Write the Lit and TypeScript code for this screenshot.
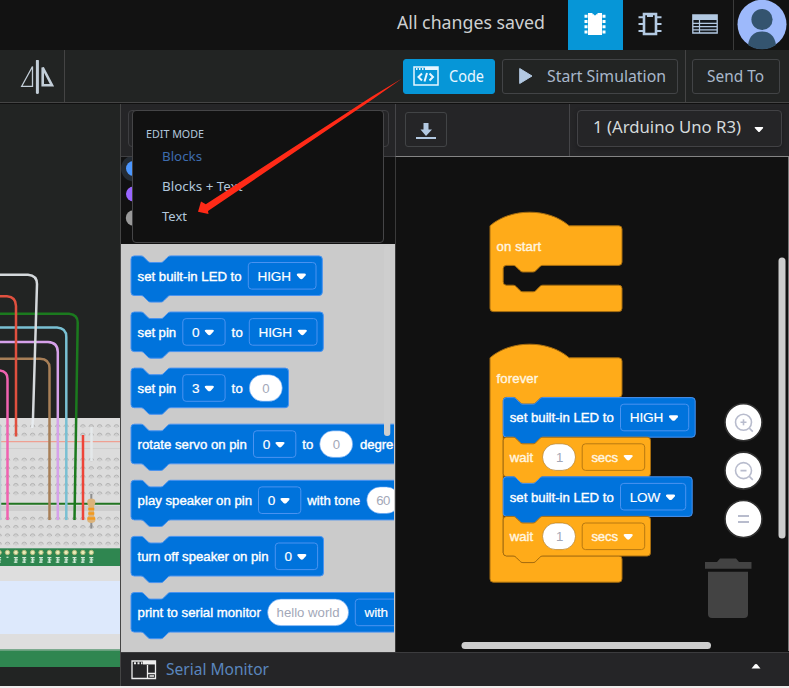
import { LitElement, html, svg, css } from "lit";
import { customElement, property } from "lit/decorators.js";

// Block geometry is expressed in grid units; U converts a unit to pixels.
const U = 0.825;
const NOTCH = "c2,0 3,1 4,2 l4,4 c1,1 2,2 4,2 h12 c2,0 3,-1 4,-2 l4,-4 c1,-1 2,-2 4,-2";
const NOTCH_BACK = "c-2,0 -3,1 -4,2 l-4,4 c-1,1 -2,2 -4,2 h-12 c-2,0 -3,-1 -4,-2 l-4,-4 c-1,-1 -2,-2 -4,-2";

type Tone = "blue" | "orange";
type Part = { kind: "text" | "menu" | "value"; x: number; w: number; text: string; tw?: number };
type Block = { tone: Tone; w: number; parts: Part[] };

const t = (text: string, x: number, w: number): Part => ({ kind: "text", text, x, w });
const menu = (text: string, x: number, w: number, tw: number): Part => ({ kind: "menu", text, x, w, tw });
const value = (text: string, x: number, w: number, tw: number): Part => ({ kind: "value", text, x, w, tw });

const PALETTE: Block[] = [
  { tone: "blue", w: 191.3, parts: [t("set built-in LED to", 6.6, 104), menu("HIGH", 117.3, 67.7, 33.5)] },
  { tone: "blue", w: 192.3, parts: [t("set pin", 6.6, 38.5), menu("0", 51.8, 42.3, 7), t("to", 100.6, 11.2), menu("HIGH", 118.3, 67.7, 33.5)] },
  { tone: "blue", w: 157.5, parts: [t("set pin", 6.6, 38.5), menu("3", 51.8, 42.3, 7), t("to", 100.6, 11.2), value("0", 118.3, 33, 7)] },
  { tone: "blue", w: 330, parts: [t("rotate servo on pin", 6.6, 109.3), menu("0", 122.5, 42.3, 7), t("to", 171.2, 11.2), value("0", 188.7, 33, 7), t("degre", 228.9, 33.4)] },
  { tone: "blue", w: 330, parts: [t("play speaker on pin", 6.6, 114.5), menu("0", 127.5, 42.3, 7), t("with tone", 176.3, 52.7), value("60", 235.8, 33, 14)] },
  { tone: "blue", w: 192.5, parts: [t("turn off speaker on pin", 6.6, 131), menu("0", 144.3, 42.3, 7)] },
  { tone: "blue", w: 330, parts: [t("print to serial monitor", 6.6, 123.2), value("hello world", 136.6, 81, 63), menu("with", 224.3, 110, 23.5)] },
];
const led = (state: string, w: number, tw: number): Block => ({
  tone: "blue", w: w + 123.8, parts: [t("set built-in LED to", 6.6, 104), menu(state, 117.3, w, tw)],
});
const wait: Block = { tone: "orange", w: 147.3, parts: [t("wait", 6.6, 23.3), value("1", 39.3, 33, 6), menu("secs", 79, 62.5, 26.5)] };
const LOOP: Block[] = [led("HIGH", 68.2, 33.5), wait, led("LOW", 65.2, 30.5), wait];

const caret = (x: number, y: number) => svg`<path d="M${x} ${y}h6.4q2 .2 1 1.9l-2.7 3q-1.5 1.3-3 0l-2.7-3q-1-1.7 1-1.9z" fill="#fff"/>`;

function drawBlock(b: Block, x: number, y: number) {
  const w = b.w / U;
  const d = `M0,4 a4,4 0 0 1 4,-4 h8 ${NOTCH} H${w - 4} a4,4 0 0 1 4,4 v40 a4,4 0 0 1 -4,4 H48 ${NOTCH_BACK} h-8 a4,4 0 0 1 -4,-4 z`;
  return svg`<g class=${b.tone} transform="translate(${x} ${y})">
    <path class="shape" d=${d} transform="scale(${U})"/>
    ${b.parts.map((p) => {
      if (p.kind === "text") return svg`<text class="word" x=${p.x} y="24.9" textLength=${p.w}>${p.text}</text>`;
      // The caret sits beside its word, or at the far end when the field runs past the panel.
      if (p.kind === "menu") return svg`<rect class="field" x=${p.x} y="6.6" width=${p.w} height="26.6" rx="3.3"/>
        <text class="opt" x=${p.x + 9.3} y="24.9" textLength=${p.tw}>${p.text}</text>${caret(p.w > 100 ? p.x + p.w - 16 : p.x + 9.3 + (p.tw ?? 0) + 7, 17.7)}`;
      return svg`<rect class="value" x=${p.x} y="6.6" width=${p.w} height="26.6" rx="13.3"/>
        <text class="val" x=${p.x + (p.w - (p.tw ?? 0)) / 2} y="24.9" textLength=${p.tw}>${p.text}</text>`;
    })}
  </g>`;
}

function drawHat(name: string, nameWidth: number, x: number, y: number, inner: number) {
  const d = `M0,0 c25,-22 71,-22 96,0 H156 a4,4 0 0 1 4,4 v40 a4,4 0 0 1 -4,4 H64 ${NOTCH_BACK} h-8 a4,4 0 0 0 -4,4 v${inner - 8} a4,4 0 0 0 4,4 h8 ${NOTCH} H156 a4,4 0 0 1 4,4 v24 a4,4 0 0 1 -4,4 H4 a4,4 0 0 1 -4,-4 z`;
  return svg`<g class="orange" transform="translate(${x} ${y})">
    <path class="shape" d=${d} transform="scale(${U})"/>
    <text class="word" x="6.6" y="25.2" textLength=${nameWidth}>${name}</text>
  </g>`;
}

const blockStyles = css`
  .blue .shape { fill: #0073dc; stroke: #4a93f0; }
  .orange .shape { fill: #ffab19; stroke: #a66d10; }
  .shape { stroke-width: 1px; vector-effect: non-scaling-stroke; }
  .field { fill: none; }
  .blue .field { stroke: #4a93f0; }
  .orange .field { stroke: #b87911; }
  .value { fill: #fff; stroke: #5b9df0; stroke-width: .6; }
  .orange .value { stroke: #a66d10; }
  text { font: 13.2px "Liberation Sans", Arial, sans-serif; }
  .word { fill: #fff; stroke: #fff; stroke-width: .38; }
  .opt { fill: #fff; stroke: #fff; stroke-width: .15; font-size: 13.6px; }
  .orange .word, .orange .opt { fill: #fff6e0; stroke: #fff6e0; stroke-width: .38; font-size: 13.2px; }
  .val { fill: #a3a8b8; }
`;

@customElement("fit-label")
class FitLabel extends LitElement {
  @property() text = "";
  @property({ type: Number }) width = 100;
  @property({ type: Number }) size = 16;
  static styles = css`
    :host { display: block; flex: none; }
    svg { display: block; overflow: visible; }
    text { font-family: "Noto Sans", "Open Sans", sans-serif; fill: currentColor; }
  `;
  render() {
    return html`<svg width=${this.width} height=${this.size}><text y=${this.size * 0.86} font-size=${this.size} textLength=${this.width} lengthAdjust="spacingAndGlyphs">${this.text}</text></svg>`;
  }
}

@customElement("circuit-view")
class CircuitView extends LitElement {
  static styles = css`
    :host { display: block; overflow: hidden; background: #222423; }
    svg { display: block; }
    .wire { fill: none; stroke-width: 2.5; stroke-linecap: butt; }
    .hole { fill: #cfcfcf; stroke: none; }
    .rim { fill: none; stroke: #b0b0b0; stroke-width: .9; }
  `;
  render() {
    const cols = Array.from({ length: 15 }, (_, i) => -0.9 + i * 8.38);
    const rows = [426.5, 435, 460, 468.5, 477, 485.3, 493.7, 519, 527.3, 535.7, 544];
    const wires: [string, string][] = [
      ["#f062b0", "M-4 370.5H-1Q7.5 371 7.5 379V520"],
      ["#a87f57", "M0 358.7H40Q49.5 359 49.5 368V520"],
      ["#d6a1ea", "M0 342H48Q57.8 342.5 57.8 352V520"],
      ["#79c0d3", "M0 327.5H57Q66.3 328 66.3 337V520"],
      ["#1b7a1e", "M0 313.7H69Q78 314.5 77.7 323L74.5 520"],
      ["#e0503f", "M0 296.3H7Q16 297 16 306V436.5"],
      ["#ee4438", "M83 435V520"],
      ["#d5d9dc", "M0 274.7H28Q37 275.5 37 284L33 418"],
      ["#e8ecef", "M33 418L32.3 428"],
      ["#e4e8ea", "M91.5 427V461"],
      ["#b9cbd2", "M0 426V520"],
    ];
    return html`<svg width="120" height="582" viewBox="0 104 120 582">
      <rect y="418" width="120" height="249" fill="#dcdcdc"/>
      <path d="M0 448.5H120" stroke="#cfcfcf"/>
      <path d="M0 441.6H120" stroke="#efa092" stroke-width="1.3"/>
      <rect y="506" width="120" height="5" fill="#cdcdcd"/>
      ${rows.map((y) => cols.map((x) => svg`<circle class="hole" cx=${x} cy=${y} r="1.8"/><path class="rim" d="M${x - 2.3} ${y + 0.4}a2.3 2.3 0 0 1 4.6 0"/>`))}
      <path d="M0 503.8H120" stroke="#227522" stroke-width="2"/>
      <rect y="548.3" width="120" height="17.7" fill="#2f8650"/>
      ${cols.slice(0, 12).map((x, i) => svg`<circle cx=${x} cy="552.5" r="2.2" fill="#e8ecb8" stroke="#b3b77b"/>
        <path d=${i === 1 ? `M${x - 1} 557.3h2` : `M${x - 2} 557.6h4M${x - 1.5} 559.8h3.5M${x - 2} 562.2h3.6M${x} 557v6`} stroke="#cfe8d5" stroke-width="1.2"/>`)}
      <rect y="566" width="120" height="15" fill="#dedede"/>
      <rect y="581" width="120" height="53" fill="#dde9fc"/>
      <rect y="634" width="120" height="15.5" fill="#dedede"/>
      <rect y="649.5" width="120" height="17.5" fill="#2f8650"/>
      <path d="M0 650H120" stroke="#7aa98b" stroke-width="1.5"/>
      ${wires.map(([c, d]) => svg`<path class="wire" stroke=${c} d=${d}/>`)}
      <path d="M91.3 494V528.5" stroke="#8e8e8e" stroke-width="2"/>
      <path d="M88 499.5q3.3-1.8 6.6 0 1.8 3-.6 7v9q2.6 4 .6 6.5-3.3 2-6.6 0-2-2.5.6-6.5v-9q-2.4-4-.6-7z" fill="#dcb37a"/>
      <path d="M88.3 509h6M88.3 513.5h6M87.5 518.5h7.6" stroke="#f29a1f" stroke-width="2.6"/>
    </svg>`;
  }
}

@customElement("block-palette")
class BlockPalette extends LitElement {
  static styles = [blockStyles, css`
    :host { display: block; background: #cbcbcb; }
    svg { display: block; }
  `];
  render() {
    return html`<svg width="273" height="408" viewBox="121 244 273 408">
      ${PALETTE.map((b, i) => drawBlock(b, 131, 255.9 + i * 56.1))}
      <rect x="384" y="246" width="6.3" height="190" rx="3" fill="#cecece"/>
    </svg>`;
  }
}

@customElement("block-workspace")
class BlockWorkspace extends LitElement {
  static styles = [blockStyles, css`
    :host { display: block; background: #111; }
    svg { display: block; }
  `];
  render() {
    return html`<svg width="393" height="495" viewBox="396 157 393 495">
      ${drawHat("on start", 44.5, 490, 225.8, 24)}
      ${drawHat("forever", 41.5, 490, 357.8, 192)}
      ${LOOP.map((b, i) => drawBlock(b, 503.2, 397.6 + i * 39.6))}
      ${[422.3, 470.6, 519].map((y, i) => svg`<g transform="translate(743.5 ${y})" fill="none" stroke="#b8bccd" stroke-width="1.6">
        <circle r="18.5" fill="#fff" stroke="#303030"/>
        ${i < 2 ? svg`<circle r="8"/><path d="M5.800 5.800L9.300 9.300M-3 0H3"/>` : svg`<path d="M-5.500 -3H5.500M-5.500 3H5.500" stroke-width="2"/>`}
        ${i === 0 ? svg`<path d="M0 -3V3"/>` : ""}
      </g>`)}
      <path d="M705 562h12l3-3.500h16l3 3.500h12.500v6.700H705zM708 571.700h40V614q0 4-4 4H712q-4 0-4-4z" fill="#434343"/>
      <rect x="778.5" y="257.500" width="7" height="281" rx="3.500" fill="#cdcdcd"/>
      <rect x="461.500" y="642" width="249.500" height="7" rx="3.500" fill="#cdcdcd"/>
      <path d="M788.500 157V651" stroke="#777"/>
    </svg>`;
  }
}

@customElement("app-root")
class AppRoot extends LitElement {
  static styles = css`
    :host { display: grid; grid-template-rows: 50px 54px 582px 2px; width: 789px; height: 688px; position: relative; overflow: hidden; background: #111; color: #c3cfdb; }
    * { box-sizing: border-box; }
    svg { display: block; flex: none; }
    .header, .tools, .status { display: flex; align-items: center; }
    .header { justify-content: flex-end; background: #121212; }
    .saved { margin: -5px 23px 0 0; color: #ced0d1; }
    .view { width: 55px; height: 50px; display: grid; place-items: center; padding: 0 1px 3px 0; color: #b3c9e2; }
    .view.active { background: #0696d7; color: #fff; }
    .user { width: 56px; height: 50px; border-left: 1px solid #3b3b3b; padding-left: 2.5px; }
    .tools { background: #222423; border-bottom: 1px solid #101010; box-shadow: inset 0 -1px #454545; padding-bottom: 2px; }
    .flip { width: 65px; height: 52px; border-right: 1px solid #444; padding: 10px 0 0 20px; margin-right: 338px; flex: none; }
    .btn { display: flex; align-items: center; height: 35px; border: 1px solid #424446; border-radius: 3px; flex: none; color: #a9b8cb; }
    .btn fit-label { margin-top: 2px; }
    .btn.primary { width: 92px; background: #0696d7; border-color: #0696d7; color: #e8f6ff; padding-left: 9px; gap: 9.5px; margin: 1px 7px 0 0; }
    .btn.start { width: 176px; padding-left: 16px; gap: 14px; margin: 1px 7px 0 0; }
    .sendwrap { height: 52px; border-left: 1px solid #444; padding: 9px 0 0 6px; }
    .btn.send { width: 88px; padding-left: 14px; }
    .main { display: grid; grid-template-columns: 120px 669px; }
    .panel { display: grid; grid-template-columns: 275px 393px; grid-template-rows: 53px 495px 34px; border-left: 1px solid #454545; }
    .bar { background: #252527; border-bottom: 1px solid #404043; }
    .bar.left { padding: 6px 0 0 7px; }
    .mode { width: 261px; height: 37px; border: 1px solid #3e3e41; border-radius: 4px; }
    .bar.right { display: flex; margin-left: -1px; border-left: 1px solid #454548; border-bottom-color: #858585; }
    .save { width: 174px; padding: 8px 0 0 9px; border-right: 1px solid #454548; }
    .save .btn { width: 42px; height: 35px; padding: 3px 0 0 10px; }
    .board { display: flex; align-items: center; width: 205px; height: 37px; margin: 6px 0 0 7px; border: 1px solid #424245; border-radius: 4px; box-shadow: 0 2px 4px #1c1c1e; color: #d4dadb; padding-left: 15px; gap: 13px; }
    .board fit-label { margin-top: -2px; }
    .side { display: grid; grid-template-rows: 87px 408px; background: #111; border-right: 1px solid #3a3a3a; overflow: hidden; }
    .status { grid-column: 1 / 3; background: #252527; border-top: 1px solid #3c3c3e; color: #5a86bd; padding: 0 28px 0 9.5px; gap: 9px; }
    .status .up { margin-left: auto; margin-top: -6px; }
    .foot { background: #efecec; }
    .menu { position: absolute; left: 132px; top: 110px; width: 252px; height: 133px; background: #111; border: 1px solid #454547; border-radius: 4px; padding: 17px 0 0 13px; color: #b1c7dc; }
    .menu .item { margin-left: 16px; margin-bottom: 17px; }
    .menu .title { margin-bottom: 10.5px; }
    .menu .current { color: #3e6cae; }
    .pointer { position: absolute; left: 0; top: 0; pointer-events: none; }
  `;
  render() {
    return html`
      <div class="header">
        <fit-label class="saved" text="All changes saved" width="148" size="18.3"></fit-label>
        <div class="view active"><svg width="22" height="24"><path d="M4 1h5q2 3.500 4 0h5v22H4z" fill="#fff"/><path d="M8.500 1h5v1.300h-1.300l-1.200 1.500-1.200-1.500H8.500z" fill="#0696d7"/><path d="M.500 4.300h3M.500 9.500h3M.500 14.700h3M.500 20h3M18.500 4.300h3M18.500 9.500h3M18.500 14.700h3M18.500 20h3" stroke="#fff" stroke-width="3"/></svg></div>
        <div class="view"><svg width="24" height="24" fill="none" stroke="currentColor"><path d="M6 2h12v20H6z" stroke-width="2.600"/><path d="M.500 5.300h4.500M.500 12h4.500M.500 19h4.500M19 5.300h4.500M19 12h4.500M19 19h4.500M10 1.500v2.500h4V1.500" stroke-width="2"/></svg></div>
        <div class="view"><svg width="26" height="20"><path d="M.800 1h24.400v18H.800z" fill="#161b20" stroke="#b3c9e2" stroke-width="1.300"/><path d="M1 1h24v5H1z" fill="#b3c9e2"/><path d="M1 9.300h24M1 12.600h24M1 15.900h24M7.500 6v13" stroke="#b3c9e2" stroke-width="1.200"/></svg></div>
        <div class="user"><svg width="50" height="50"><circle cx="25" cy="24.300" r="24.500" fill="#9db9fb"/><circle cx="25" cy="19.500" r="10.600" fill="#34546f"/><path d="M11 45q2-13.500 14-13.500T39 45q-6 4.200-14 4.200T11 45z" fill="#34546f"/></svg></div>
      </div>
      <div class="tools">
        <div class="flip"><svg width="34" height="34" fill="none" stroke="#c3ced8"><path d="M12.500 6.500V26.300H1.700z" stroke-width="1.300"/><path d="M17.400 1V32.500" stroke-width="3" stroke-linecap="round"/><path d="M22.700 7.500V25.300H32z" stroke-width="2.600"/></svg></div>
        <div class="btn primary"><svg width="26" height="20" fill="none" stroke="#e8f6ff" stroke-width="1.500"><path d="M1 1h24v18H1z"/><path d="M9 7.500L5.500 11l3.500 3.500M16.500 7.500l3.500 3.500-3.500 3.500M14 7l-2.500 8.500" stroke-width="2"/><path d="M12 2.500h13" stroke-width="3"/><path d="M3 3h1.500M6 3h1.500M9 3h1.500" stroke-width="2"/></svg><fit-label text="Code" width="35" size="15.5"></fit-label></div>
        <div class="btn start"><svg width="14" height="18"><path d="M.700 1.500V16.500L13 9z" fill="#b3c9e2" stroke="#b3c9e2"/></svg><fit-label text="Start Simulation" width="119" size="15.5"></fit-label></div>
        <div class="sendwrap"><div class="btn send"><fit-label text="Send To" width="57" size="15.5"></fit-label></div></div>
      </div>
      <div class="main">
        <circuit-view></circuit-view>
        <div class="panel">
          <div class="bar left"><div class="mode"></div></div>
          <div class="bar right">
            <div class="save"><div class="btn"><svg width="20" height="18"><path d="M7.500 1h5v6.500H16L10 14 4.500 7.500h3z" fill="#b3c9e2"/><path d="M0 16h20" stroke="#b3c9e2" stroke-width="2"/></svg></div></div>
            <div class="board"><fit-label text="1 (Arduino Uno R3)" width="148" size="16.5"></fit-label><svg width="10" height="8"><path d="M.500 2.500q.5-.7 1-.5h7q1 0 .500 1.300L5.500 7H4.500L1 3.300z" fill="#fff"/></svg></div>
          </div>
          <div class="side">
            <svg width="274" height="87"><circle cx="13" cy="11.500" r="13" fill="#242b33"/><circle cx="12.500" cy="11.500" r="7.500" fill="#4c97ff"/><circle cx="12.500" cy="37" r="7.500" fill="#9966ff"/><circle cx="12.500" cy="61" r="7.700" fill="#9a9a9a"/></svg>
            <block-palette></block-palette>
          </div>
          <block-workspace></block-workspace>
          <div class="status"><svg width="26" height="20" fill="none" stroke="#eee" stroke-width="1.300"><path d="M1 1h23.500v17.500H1z"/><path d="M12 2.700h12.500" stroke-width="3.500"/><path d="M3 3.200h2M6.500 3.200h2M10 3.200h1.500" stroke-width="2"/><path d="M16.500 5v13.500M16.500 13.500h8M18.500 16h4.500"/></svg><fit-label text="Serial Monitor" width="103" size="15.5"></fit-label><svg class="up" width="10" height="7"><path d="M.500 5.500L4 1.300q1-.8 2 0l3.500 4.200z" fill="#fff"/></svg></div>
        </div>
      </div>
      <div class="foot"></div>
      <div class="menu">
        <fit-label class="title" text="EDIT MODE" width="58" size="11.5"></fit-label>
        <fit-label class="item current" text="Blocks" width="40" size="13"></fit-label>
        <fit-label class="item" text="Blocks + Text" width="80.5" size="13"></fit-label>
        <fit-label class="item" text="Text" width="25" size="13"></fit-label>
      </div>
      <svg class="pointer" width="789" height="688"><path d="M198 211.800L201 201.500L205.800 204.200L372 96.500L402 78.500L373 99L208 211L208.500 213.900z" fill="#ff2a17"/></svg>
    `;
  }
}
